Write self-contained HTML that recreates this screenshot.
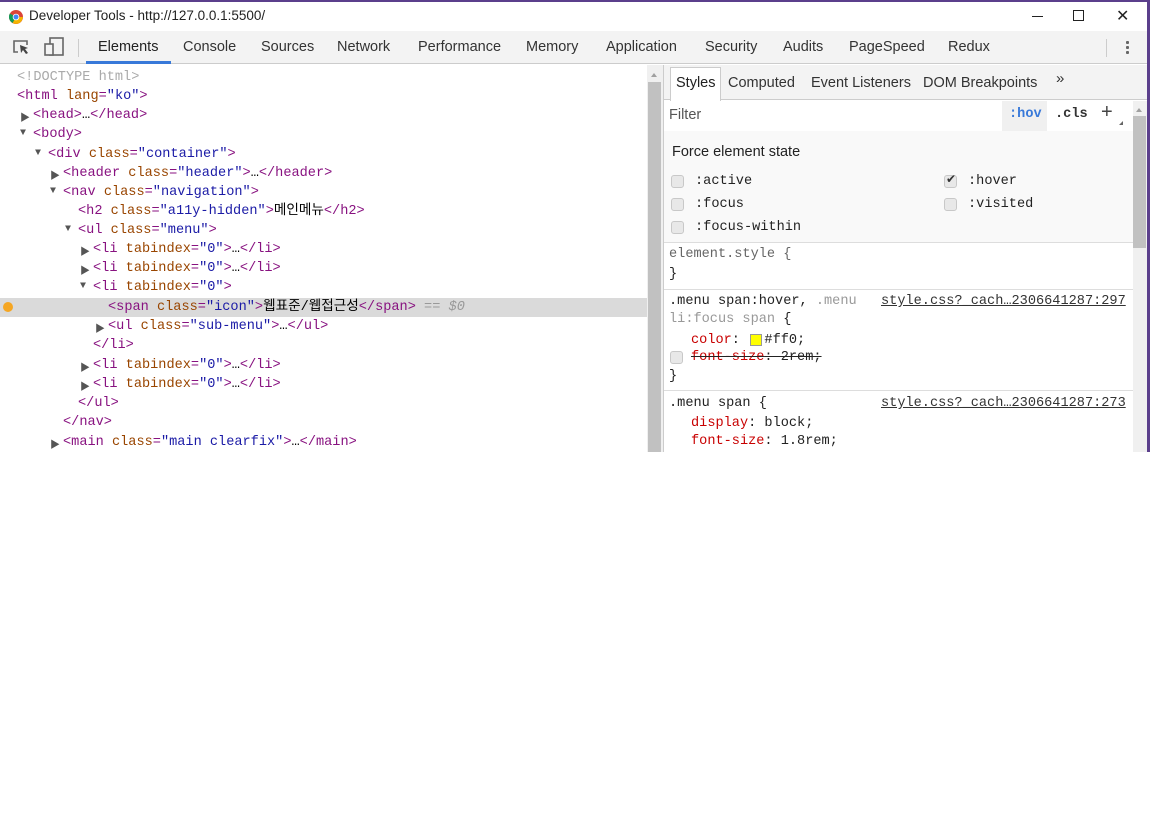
<!DOCTYPE html>
<html><head><meta charset="utf-8"><style>
*{margin:0;padding:0;box-sizing:border-box}
body{width:1150px;height:452px;overflow:hidden;background:#fff;font-family:"Liberation Sans","Noto Sans CJK KR",sans-serif;position:relative}
.abs{position:absolute}
.mono{font-family:"Liberation Mono","Noto Sans CJK KR",monospace;font-size:13.6px;white-space:pre}
.title{left:0;top:0;width:1150px;height:31px;border-top:2px solid #5b3f8c;border-right:3px solid #5b3f8c}
.tb{top:31px;left:0;width:1147px;height:33px;background:#f3f3f3;border-bottom:1px solid #ccc}
.tab{position:absolute;top:8px;font-size:14.5px;color:#333}
.row{position:absolute;height:19px;line-height:19px}
.t{color:#881280}.a{color:#994500}.v{color:#1a1aa6}.g{color:#999}
.tri{position:absolute;font-size:10px;color:#555}
.cb{position:absolute;width:13px;height:13px;border:1px solid #c8c8c8;border-radius:3px;background:#e8e8e8}
.p{color:#c80000}
.lnk{position:absolute;color:#333;text-decoration:underline}
</style></head><body>
<div class="abs title">
 <svg class="abs" style="left:9px;top:8px" width="14" height="14" viewBox="0 0 14 14"><circle cx="7" cy="7" r="7" fill="#db4437"/><path d="M7 7 L13.9 7 A7 7 0 0 1 3.5 13 Z" fill="#f4b400"/><path d="M7 7 L3.5 13 A7 7 0 0 1 0.9 3.5 Z" fill="#0f9d58"/><circle cx="7" cy="7" r="3.3" fill="#fff"/><circle cx="7" cy="7" r="2.5" fill="#4285f4"/></svg>
 <div class="abs" style="left:29px;top:6px;font-size:13.5px;color:#222">Developer Tools - http://127.0.0.1:5500/</div>
 <div class="abs" style="left:1032px;top:14px;width:11px;height:1px;background:#222"></div>
 <div class="abs" style="left:1073px;top:8px;width:11px;height:11px;border:1px solid #222"></div>
 <div class="abs" style="left:1116px;top:4px;font-size:16px;color:#222">✕</div>
</div>
<div class="abs tb">
 <svg class="abs" style="left:12px;top:8px" width="20" height="18" viewBox="0 0 20 18"><path d="M6 13H2V2h13v4" fill="none" stroke="#666" stroke-width="1.6"/><path d="M8 6l8 3-3 1 3 4-2 1-3-4-2 3z" fill="#444"/></svg>
 <svg class="abs" style="left:44px;top:6px" width="22" height="20" viewBox="0 0 22 20"><rect x="6" y="1" width="13" height="17" fill="none" stroke="#666" stroke-width="1.6"/><rect x="1" y="7" width="8" height="11" fill="#f3f3f3" stroke="#666" stroke-width="1.6"/></svg>
 <div class="abs" style="left:78px;top:8px;width:1px;height:18px;background:#ccc"></div>
 <div class="tab" style="left:98px;color:#222">Elements</div>
 <div class="abs" style="left:86px;top:30px;width:85px;height:3px;background:#3879d9"></div>
 <div class="tab" style="left:183px">Console</div>
 <div class="tab" style="left:261px">Sources</div>
 <div class="tab" style="left:337px">Network</div>
 <div class="tab" style="left:418px">Performance</div>
 <div class="tab" style="left:526px">Memory</div>
 <div class="tab" style="left:606px">Application</div>
 <div class="tab" style="left:705px">Security</div>
 <div class="tab" style="left:783px">Audits</div>
 <div class="tab" style="left:849px">PageSpeed</div>
 <div class="tab" style="left:948px">Redux</div>
 <div class="abs" style="left:1106px;top:8px;width:1px;height:18px;background:#ccc"></div>
 <div class="abs" style="left:1126px;top:10px;width:3px;height:3px;background:#666;box-shadow:0 5px #666,0 10px #666;border-radius:1px"></div>
</div>

<div class="abs" style="left:0;top:298px;width:647px;height:19px;background:#dadada"></div>
<div class="abs" style="left:3px;top:302px;width:10px;height:10px;border-radius:50%;background:#f5a623"></div>
<div class="mono">
<div class="row" style="left:17px;top:68px;color:#aaa">&lt;!DOCTYPE html&gt;</div>
<div class="row" style="left:17px;top:87px"><span class="t">&lt;html</span> <span class="a">lang</span><span class="t">=</span><span class="v">"ko"</span><span class="t">&gt;</span></div>
<div class="tri" style="left:20px;top:109px">▶</div>
<div class="row" style="left:33px;top:106px"><span class="t">&lt;head&gt;</span>…<span class="t">&lt;/head&gt;</span></div>
<div class="tri" style="left:20px;top:128px">▼</div>
<div class="row" style="left:33px;top:125px"><span class="t">&lt;body&gt;</span></div>
<div class="tri" style="left:35px;top:148px">▼</div>
<div class="row" style="left:48px;top:145px"><span class="t">&lt;div</span> <span class="a">class</span><span class="t">=</span><span class="v">"container"</span><span class="t">&gt;</span></div>
<div class="tri" style="left:50px;top:167px">▶</div>
<div class="row" style="left:63px;top:164px"><span class="t">&lt;header</span> <span class="a">class</span><span class="t">=</span><span class="v">"header"</span><span class="t">&gt;</span>…<span class="t">&lt;/header&gt;</span></div>
<div class="tri" style="left:50px;top:186px">▼</div>
<div class="row" style="left:63px;top:183px"><span class="t">&lt;nav</span> <span class="a">class</span><span class="t">=</span><span class="v">"navigation"</span><span class="t">&gt;</span></div>
<div class="row" style="left:78px;top:202px"><span class="t">&lt;h2</span> <span class="a">class</span><span class="t">=</span><span class="v">"a11y-hidden"</span><span class="t">&gt;</span>메인메뉴<span class="t">&lt;/h2&gt;</span></div>
<div class="tri" style="left:65px;top:224px">▼</div>
<div class="row" style="left:78px;top:221px"><span class="t">&lt;ul</span> <span class="a">class</span><span class="t">=</span><span class="v">"menu"</span><span class="t">&gt;</span></div>
<div class="tri" style="left:80px;top:243px">▶</div>
<div class="row" style="left:93px;top:240px"><span class="t">&lt;li</span> <span class="a">tabindex</span><span class="t">=</span><span class="v">"0"</span><span class="t">&gt;</span>…<span class="t">&lt;/li&gt;</span></div>
<div class="tri" style="left:80px;top:262px">▶</div>
<div class="row" style="left:93px;top:259px"><span class="t">&lt;li</span> <span class="a">tabindex</span><span class="t">=</span><span class="v">"0"</span><span class="t">&gt;</span>…<span class="t">&lt;/li&gt;</span></div>
<div class="tri" style="left:80px;top:281px">▼</div>
<div class="row" style="left:93px;top:278px"><span class="t">&lt;li</span> <span class="a">tabindex</span><span class="t">=</span><span class="v">"0"</span><span class="t">&gt;</span></div>
<div class="row" style="left:108px;top:298px"><span class="t">&lt;span</span> <span class="a">class</span><span class="t">=</span><span class="v">"icon"</span><span class="t">&gt;</span>웹표준/웹접근성<span class="t">&lt;/span&gt;</span> <span class="g">== <i>$0</i></span></div>
<div class="tri" style="left:95px;top:320px">▶</div>
<div class="row" style="left:108px;top:317px"><span class="t">&lt;ul</span> <span class="a">class</span><span class="t">=</span><span class="v">"sub-menu"</span><span class="t">&gt;</span>…<span class="t">&lt;/ul&gt;</span></div>
<div class="row" style="left:93px;top:336px"><span class="t">&lt;/li&gt;</span></div>
<div class="tri" style="left:80px;top:359px">▶</div>
<div class="row" style="left:93px;top:356px"><span class="t">&lt;li</span> <span class="a">tabindex</span><span class="t">=</span><span class="v">"0"</span><span class="t">&gt;</span>…<span class="t">&lt;/li&gt;</span></div>
<div class="tri" style="left:80px;top:378px">▶</div>
<div class="row" style="left:93px;top:375px"><span class="t">&lt;li</span> <span class="a">tabindex</span><span class="t">=</span><span class="v">"0"</span><span class="t">&gt;</span>…<span class="t">&lt;/li&gt;</span></div>
<div class="row" style="left:78px;top:394px"><span class="t">&lt;/ul&gt;</span></div>
<div class="row" style="left:63px;top:413px"><span class="t">&lt;/nav&gt;</span></div>
<div class="tri" style="left:50px;top:436px">▶</div>
<div class="row" style="left:63px;top:433px"><span class="t">&lt;main</span> <span class="a">class</span><span class="t">=</span><span class="v">"main clearfix"</span><span class="t">&gt;</span>…<span class="t">&lt;/main&gt;</span></div>
</div>

<div class="abs" style="left:647px;top:65px;width:16px;height:387px;background:#f0f0f0"></div>
<div class="abs" style="left:648px;top:82px;width:13px;height:370px;background:#c1c1c1"></div>
<div class="abs" style="left:651px;top:70px;width:0;height:0;border:3px solid transparent;border-bottom:4px solid #a0a0a0"></div>
<div class="abs" style="left:663px;top:65px;width:1px;height:387px;background:#ccc"></div>

<div class="abs" style="left:664px;top:65px;width:483px;height:35px;background:#f3f3f3;border-bottom:1px solid #ccc"></div>
<div class="abs" style="left:670px;top:67px;width:51px;height:34px;background:#fff;border:1px solid #ccc;border-bottom:none"></div>
<div class="abs" style="left:676px;top:75px;font-size:14.5px;color:#222">Styles</div>
<div class="abs" style="left:728px;top:75px;font-size:14.5px;color:#333">Computed</div>
<div class="abs" style="left:811px;top:75px;font-size:14.5px;color:#333">Event Listeners</div>
<div class="abs" style="left:923px;top:75px;font-size:14.5px;color:#333">DOM Breakpoints</div>
<div class="abs" style="left:1056px;top:70px;font-size:15px;color:#333">»</div>
<div class="abs" style="left:669px;top:107px;font-size:14.5px;color:#555">Filter</div>
<div class="abs" style="left:1002px;top:101px;width:45px;height:30px;background:#f0f0f0"></div>
<div class="abs mono" style="left:1009px;top:107px;color:#3879d9;font-weight:bold">:hov</div>
<div class="abs mono" style="left:1055px;top:107px;color:#333;font-weight:bold">.cls</div>
<div class="abs" style="left:1101px;top:101px;font-size:20px;color:#444">+</div>
<div class="abs" style="left:1119px;top:121px;width:0;height:0;border-left:4px solid transparent;border-bottom:4px solid #666"></div>
<div class="abs" style="left:664px;top:131px;width:469px;height:112px;background:#f9f9f9;border-bottom:1px solid #ddd"></div>
<div class="abs" style="left:672px;top:144px;font-size:14.5px;color:#222">Force element state</div>
<div class="cb" style="left:671px;top:175px"></div>
<div class="cb" style="left:671px;top:198px"></div>
<div class="cb" style="left:671px;top:221px"></div>
<div class="cb" style="left:944px;top:175px"></div>
<div class="abs" style="left:946px;top:172px;font-size:12px;color:#333">✔</div>
<div class="cb" style="left:944px;top:198px"></div>
<div class="mono">
<div class="row" style="left:695px;top:172px;color:#222">:active</div>
<div class="row" style="left:695px;top:195px;color:#222">:focus</div>
<div class="row" style="left:695px;top:218px;color:#222">:focus-within</div>
<div class="row" style="left:968px;top:172px;color:#222">:hover</div>
<div class="row" style="left:968px;top:195px;color:#222">:visited</div>

<div class="row" style="left:669px;top:245px;color:#666">element.style {</div>
<div class="row" style="left:669px;top:265px;color:#222">}</div>
<div class="row" style="left:669px;top:292px;color:#222">.menu span:hover, <span style="color:#999">.menu</span></div>
<div class="row" style="left:669px;top:310px;color:#999">li:focus span <span style="color:#222">{</span></div>
<div class="lnk" style="left:881px;top:292px;height:19px;line-height:19px">style.css?_cach…2306641287:297</div>
<div class="row" style="left:691px;top:331px;color:#222"><span class="p">color</span>:   #ff0;</div>
<div class="abs" style="left:750px;top:334px;width:12px;height:12px;background:#ff0;border:1px solid #999"></div>
<div class="cb" style="left:670px;top:351px"></div>
<div class="row" style="left:691px;top:348px;color:#222;text-decoration:line-through"><span class="p">font-size</span>: 2rem;</div>
<div class="row" style="left:669px;top:367px;color:#222">}</div>
<div class="row" style="left:669px;top:394px;color:#222">.menu span {</div>
<div class="lnk" style="left:881px;top:394px;height:19px;line-height:19px">style.css?_cach…2306641287:273</div>
<div class="row" style="left:691px;top:414px;color:#222"><span class="p">display</span>: block;</div>
<div class="row" style="left:691px;top:432px;color:#222"><span class="p">font-size</span>: 1.8rem;</div>
</div>
<div class="abs" style="left:664px;top:289px;width:469px;height:1px;background:#ddd"></div>
<div class="abs" style="left:664px;top:390px;width:469px;height:1px;background:#ddd"></div>

<div class="abs" style="left:1133px;top:101px;width:14px;height:351px;background:#f0f0f0"></div>
<div class="abs" style="left:1133px;top:116px;width:13px;height:132px;background:#c1c1c1"></div>
<div class="abs" style="left:1136px;top:105px;width:0;height:0;border:3px solid transparent;border-bottom:4px solid #a0a0a0"></div>
<div class="abs" style="left:1147px;top:0;width:3px;height:452px;background:#5b3f8c"></div>
</body></html>
